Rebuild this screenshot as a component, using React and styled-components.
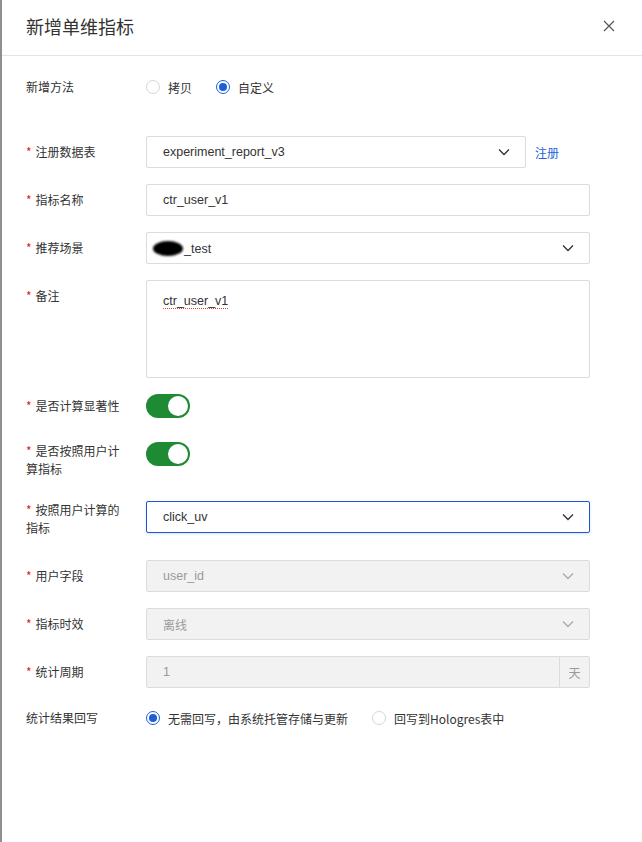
import React from "react";
import styled, { createGlobalStyle } from "styled-components";

const Global = createGlobalStyle`
  html, body { margin: 0; padding: 0; background: #fff; }
  body { font-family: "Liberation Sans", "Noto Sans CJK SC", sans-serif; color: #333; }
  * { box-sizing: border-box; }
`;

const Page = styled.div`
  min-height: 842px;
  border-left: 2px solid #8f8f8f;
  background: #fff;
`;

const Header = styled.div`
  height: 56px;
  padding: 0 24px 4px 24px;
  display: flex;
  align-items: center;
  justify-content: space-between;
  border-bottom: 1px solid #e3e3e3;
`;

const Title = styled.div`
  font-size: 18px;
  color: #333;
  font-family: "Noto Sans CJK SC", sans-serif;
`;

const CloseBtn = styled.button`
  border: 0;
  background: none;
  padding: 0;
  width: 14px;
  height: 14px;
  display: flex;
  align-items: center;
  justify-content: center;
  margin-right: 2px;
  cursor: pointer;
`;

const Body = styled.div`
  padding: 15px 52px 0 24px;
`;

const Row = styled.div`
  display: grid;
  grid-template-columns: 120px 1fr;
  align-items: start;
  margin-bottom: ${(p) => p.$mb ?? 16}px;
`;

const Label = styled.div`
  font-size: 12px;
  font-family: "Noto Sans CJK SC", sans-serif;
  color: #333;
  line-height: ${(p) => p.$lh ?? 32}px;
  min-height: ${(p) => (p.$multi ? 0 : p.$lh ?? 32)}px;
  max-height: ${(p) => (p.$multi ? 100 : p.$lh ?? 32)}px;
  padding-bottom: ${(p) => p.$pb ?? 0}px;
  padding-right: 22px;
  overflow: visible;
`;

const Star = styled.span`
  color: #e02020;
  margin-right: 4px;
  font-family: inherit;
  line-height: inherit;
`;

const Field = styled.div`
  height: 32px;
  width: ${(p) => p.$w || "100%"};
  border: 1px solid ${(p) => (p.$focus ? "#1f56d0" : "#dcdcdc")};
  box-shadow: ${(p) => (p.$focus ? "0 1px 3px rgba(31,86,208,0.18)" : "none")};
  border-radius: 2px;
  background: ${(p) => (p.$disabled ? "#f2f2f2" : "#fff")};
  display: flex;
  align-items: center;
  padding-left: 16px;
  padding-right: ${(p) => (p.$addon ? 0 : 15)}px;
  font-size: 12.5px;
  color: ${(p) => (p.$disabled ? "#9a9a9a" : "#333")};
`;

const FieldText = styled.span`
  flex: 1;
  white-space: nowrap;
  font-family: "Liberation Sans", "Noto Sans CJK SC", sans-serif;
`;

const CjkText = styled.span`
  flex: 1;
  font-size: 12px;
  font-family: "Noto Sans CJK SC", sans-serif;
`;

const Addon = styled.div`
  width: 30px;
  height: 100%;
  border-left: 1px solid #dcdcdc;
  display: flex;
  align-items: center;
  justify-content: center;
  color: #9a9a9a;
  font-size: 12px;
  font-family: "Noto Sans CJK SC", sans-serif;
`;

const Inline = styled.div`
  display: flex;
  align-items: center;
  gap: 9px;
`;

const Link = styled.a`
  color: #1f63d6;
  font-size: 12px;
  font-family: "Noto Sans CJK SC", sans-serif;
  text-decoration: none;
`;

const TextArea = styled.div`
  height: 98px;
  border: 1px solid #dcdcdc;
  border-radius: 2px;
  padding: 11px 16px;
  font-size: 12.5px;
  line-height: 18px;
`;

const Spell = styled.span`
  text-decoration: underline dotted #e0453a;
  text-underline-offset: 3px;
  text-decoration-thickness: 1px;
`;

const Blob = styled.span`
  display: inline-block;
  width: 30px;
  height: 15px;
  background: #000;
  border-radius: 50%;
  filter: blur(1.2px);
  margin-left: -10px;
  margin-right: 1px;
  vertical-align: -3px;
`;

const SwitchCell = styled.div`
  height: 32px;
`;

const Switch = styled.div`
  width: 44px;
  height: 24px;
  border-radius: 12px;
  background: ${(p) => (p.$on ? "#1f8a34" : "#ccc")};
  position: relative;
  &::after {
    content: "";
    position: absolute;
    top: 2px;
    left: ${(p) => (p.$on ? 22 : 2)}px;
    width: 20px;
    height: 20px;
    border-radius: 50%;
    background: #fff;
  }
`;

const RadioGroup = styled.div`
  display: flex;
  align-items: center;
  height: ${(p) => p.$h ?? 32}px;
  gap: ${(p) => p.$gap ?? 24}px;
`;

const RadioItem = styled.label`
  display: flex;
  align-items: center;
  gap: 8px;
  font-size: 12px;
  font-family: "Noto Sans CJK SC", sans-serif;
  color: #333;
`;

const RadioDot = styled.span`
  width: 14px;
  height: 14px;
  border-radius: 50%;
  border: ${(p) => (p.$checked ? "1.5px solid #1f5fd6" : "1px solid #d6d6d6")};
  background: #fff;
  display: flex;
  align-items: center;
  justify-content: center;
  &::after {
    content: "";
    width: 8px;
    height: 8px;
    border-radius: 50%;
    background: ${(p) => (p.$checked ? "#1f5fd6" : "transparent")};
  }
`;

const Chevron = ({ color = "#333" }) => (
  <svg width="12" height="8" viewBox="0 0 12 8">
    <polyline points="1,1.5 6,6.5 11,1.5" fill="none" stroke={color} strokeWidth="1.3" />
  </svg>
);

const CloseIcon = () => (
  <svg width="12" height="12" viewBox="0 0 12 12">
    <path d="M1 1 L11 11 M11 1 L1 11" stroke="#555" strokeWidth="1.2" />
  </svg>
);

const Req = ({ children }) => (
  <>
    <Star>*</Star>
    {children}
  </>
);

const Radio = ({ checked, children }) => (
  <RadioItem>
    <RadioDot $checked={checked} />
    {children}
  </RadioItem>
);

export default function App() {
  return (
    <Page>
      <Global />
      <Header>
        <Title>新增单维指标</Title>
        <CloseBtn aria-label="close">
          <CloseIcon />
        </CloseBtn>
      </Header>
      <Body>
        <Row $mb={33}>
          <Label>新增方法</Label>
          <RadioGroup $gap={24}>
            <Radio>拷贝</Radio>
            <Radio checked>自定义</Radio>
          </RadioGroup>
        </Row>
        <Row>
          <Label><Req>注册数据表</Req></Label>
          <Inline>
            <Field $w="380px">
              <FieldText>experiment_report_v3</FieldText>
              <Chevron />
            </Field>
            <Link href="#">注册</Link>
          </Inline>
        </Row>
        <Row>
          <Label><Req>指标名称</Req></Label>
          <Field>
            <FieldText>ctr_user_v1</FieldText>
          </Field>
        </Row>
        <Row>
          <Label><Req>推荐场景</Req></Label>
          <Field>
            <FieldText><Blob />_test</FieldText>
            <Chevron />
          </Field>
        </Row>
        <Row>
          <Label><Req>备注</Req></Label>
          <TextArea><Spell>ctr_user_v1</Spell></TextArea>
        </Row>
        <Row>
          <Label $lh={24}><Req>是否计算显著性</Req></Label>
          <SwitchCell><Switch $on /></SwitchCell>
        </Row>
        <Row>
          <Label $multi $lh={18} $pb={7}><Req>是否按照用户计算指标</Req></Label>
          <SwitchCell><Switch $on /></SwitchCell>
        </Row>
        <Row>
          <Label $multi $lh={18} $pb={7}><Req>按照用户计算的指标</Req></Label>
          <Field $focus>
            <FieldText>click_uv</FieldText>
            <Chevron />
          </Field>
        </Row>
        <Row>
          <Label><Req>用户字段</Req></Label>
          <Field $disabled>
            <FieldText>user_id</FieldText>
            <Chevron color="#aaa" />
          </Field>
        </Row>
        <Row>
          <Label><Req>指标时效</Req></Label>
          <Field $disabled>
            <CjkText>离线</CjkText>
            <Chevron color="#aaa" />
          </Field>
        </Row>
        <Row>
          <Label><Req>统计周期</Req></Label>
          <Field $disabled $addon>
            <FieldText>1</FieldText>
            <Addon>天</Addon>
          </Field>
        </Row>
        <Row>
          <Label $lh={28}>统计结果回写</Label>
          <RadioGroup $h={28} $gap={24}>
            <Radio checked>无需回写，由系统托管存储与更新</Radio>
            <Radio>回写到Hologres表中</Radio>
          </RadioGroup>
        </Row>
      </Body>
    </Page>
  );
}
